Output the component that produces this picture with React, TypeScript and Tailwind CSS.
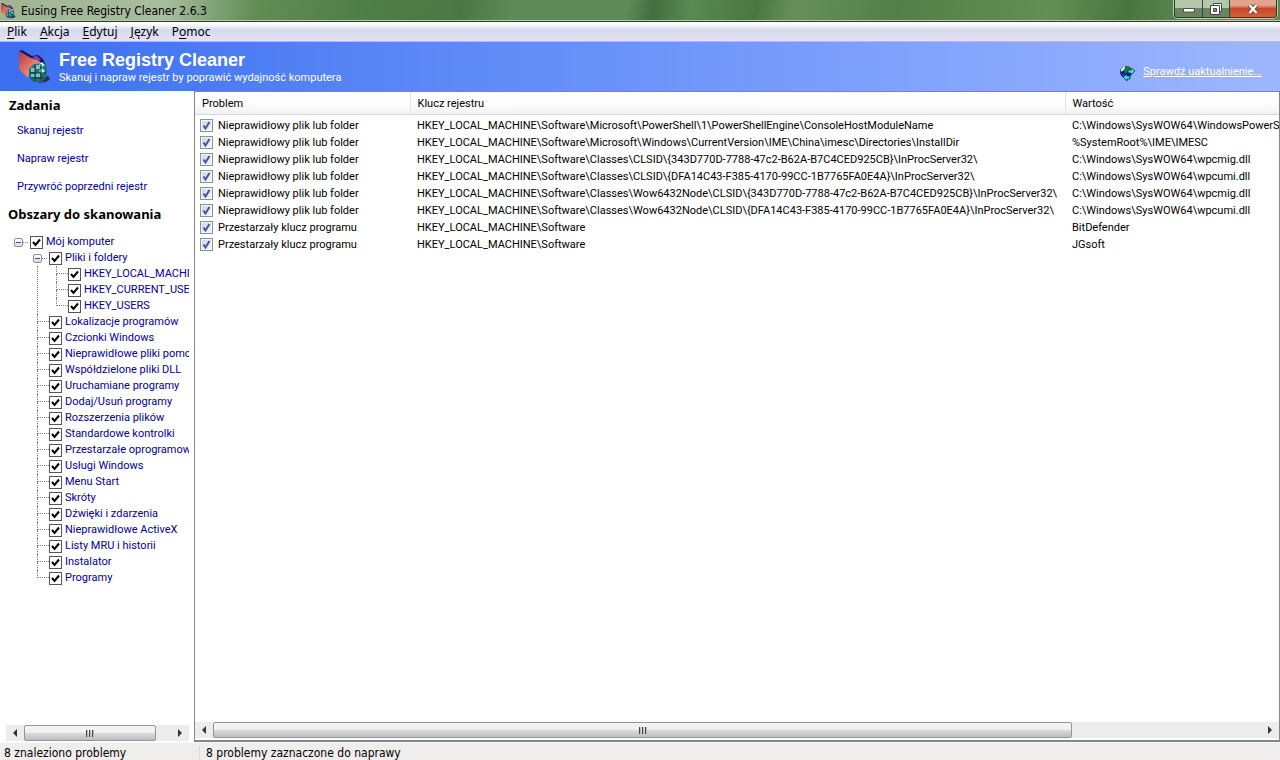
import { useState, type ReactNode } from "react";

const menuItems = [
  { before: "", key: "P", after: "lik" },
  { before: "", key: "A", after: "kcja" },
  { before: "", key: "E", after: "dytuj" },
  { before: "", key: "J", after: "ęzyk" },
  { before: "P", key: "o", after: "moc" },
];

const tasks = ["Skanuj rejestr", "Napraw rejestr", "Przywróć poprzedni rejestr"];

const hives = ["HKEY_LOCAL_MACHINE", "HKEY_CURRENT_USER", "HKEY_USERS"];

const areas = [
  "Lokalizacje programów",
  "Czcionki Windows",
  "Nieprawidłowe pliki pomocy",
  "Współdzielone pliki DLL",
  "Uruchamiane programy",
  "Dodaj/Usuń programy",
  "Rozszerzenia plików",
  "Standardowe kontrolki",
  "Przestarzałe oprogramowanie",
  "Usługi Windows",
  "Menu Start",
  "Skróty",
  "Dźwięki i zdarzenia",
  "Nieprawidłowe ActiveX",
  "Listy MRU i historii",
  "Instalator",
  "Programy",
];

const problems = [
  {
    problem: "Nieprawidłowy plik lub folder",
    registryKey: "HKEY_LOCAL_MACHINE\\Software\\Microsoft\\PowerShell\\1\\PowerShellEngine\\ConsoleHostModuleName",
    value: "C:\\Windows\\SysWOW64\\WindowsPowerShell",
  },
  {
    problem: "Nieprawidłowy plik lub folder",
    registryKey: "HKEY_LOCAL_MACHINE\\Software\\Microsoft\\Windows\\CurrentVersion\\IME\\China\\imesc\\Directories\\InstallDir",
    value: "%SystemRoot%\\IME\\IMESC",
  },
  {
    problem: "Nieprawidłowy plik lub folder",
    registryKey: "HKEY_LOCAL_MACHINE\\Software\\Classes\\CLSID\\{343D770D-7788-47c2-B62A-B7C4CED925CB}\\InProcServer32\\",
    value: "C:\\Windows\\SysWOW64\\wpcmig.dll",
  },
  {
    problem: "Nieprawidłowy plik lub folder",
    registryKey: "HKEY_LOCAL_MACHINE\\Software\\Classes\\CLSID\\{DFA14C43-F385-4170-99CC-1B7765FA0E4A}\\InProcServer32\\",
    value: "C:\\Windows\\SysWOW64\\wpcumi.dll",
  },
  {
    problem: "Nieprawidłowy plik lub folder",
    registryKey: "HKEY_LOCAL_MACHINE\\Software\\Classes\\Wow6432Node\\CLSID\\{343D770D-7788-47c2-B62A-B7C4CED925CB}\\InProcServer32\\",
    value: "C:\\Windows\\SysWOW64\\wpcmig.dll",
  },
  {
    problem: "Nieprawidłowy plik lub folder",
    registryKey: "HKEY_LOCAL_MACHINE\\Software\\Classes\\Wow6432Node\\CLSID\\{DFA14C43-F385-4170-99CC-1B7765FA0E4A}\\InProcServer32\\",
    value: "C:\\Windows\\SysWOW64\\wpcumi.dll",
  },
  { problem: "Przestarzały klucz programu", registryKey: "HKEY_LOCAL_MACHINE\\Software", value: "BitDefender" },
  { problem: "Przestarzały klucz programu", registryKey: "HKEY_LOCAL_MACHINE\\Software", value: "JGsoft" },
];

function RegistryIcon({ className }: { className: string }) {
  return (
    <svg viewBox="0 0 32 34" className={className} aria-hidden="true">
      <defs>
        <linearGradient id="book" x1="0" y1="0" x2="1" y2="1">
          <stop offset="0" stopColor="#b83838" />
          <stop offset="0.6" stopColor="#e88878" />
          <stop offset="1" stopColor="#b84040" />
        </linearGradient>
      </defs>
      <path d="M1 2 L13 8 L24 9 L26 14 L13 17 L10 28 L1 19 Z" fill="url(#book)" />
      <path d="M1 1 L4 0 L14 6 L20 5 L25 9 L28 16 L24 14 L20 10 L13 8 Z" fill="#24104e" />
      <path d="M14 7 L19 6 L23 10 L20 11 Z" fill="#7844c8" />
      <path d="M23 28 L30 26 L32 29 L28 32 L20 33 Z" fill="#26304e" />
      <path d="M11 19 L16 14 L25 13 L29 17 L29 26 L24 32 L15 32 L11 27 Z" fill="#257078" />
      <path d="M13 18h4v4h-4z M18 15h4v4h-4z M18 23h4v4h-4z M13 24h4v3h-4z" fill="#78c8bc" />
      <path d="M24 18 l3 3 -3 3 -3 -3z M21 14 l3 -2 3 3 -3 2z" fill="#baf0dc" />
      <path d="M12 23h16 M17 15v17 M23 14v17 M13 28h13" stroke="#0c3948" strokeWidth="1" fill="none" />
    </svg>
  );
}

function UpdateIcon() {
  return (
    <svg viewBox="0 0 16 16" className="h-4 w-4" aria-hidden="true">
      <circle cx="7" cy="7" r="6" fill="#101c88" />
      <path d="M2 4l3-3 2 1-2 3-3 2z" fill="#cfeee6" />
      <path d="M6 2l4-1 2 3-1 3H8L6 9 5 6z" fill="#1d7a34" />
      <path d="M3 9l3 1 1 3-3-1z" fill="#2350d8" />
      <path d="M9 5h3V3l4 3-4 4V8H9z" fill="#2ee6ee" stroke="#062a4c" strokeWidth="0.8" />
      <path d="M11 11H8V9l-4 3 4 4v-2h3z" fill="#2ee6ee" stroke="#062a4c" strokeWidth="0.8" />
    </svg>
  );
}

function WindowButtons() {
  return (
    <div className="mr-[3px] flex h-[18px] overflow-hidden rounded-b border border-t-0 border-[#274022] shadow-[0_0_0_1px_#b5cbab]">
      <button type="button" aria-label="Minimalizuj" className="flex w-7 items-center justify-center border-r border-[#324b2c] bg-linear-to-b from-[#b4c6ac] from-45% to-[#68855f] to-50%">
        <svg viewBox="0 0 12 12" className="h-3 w-3">
          <path d="M0.5 5.5h11v3.5h-11z" fill="#fff" stroke="#4b5749" />
        </svg>
      </button>
      <button type="button" aria-label="Przywróć w dół" className="flex w-[27px] items-center justify-center border-r border-[#324b2c] bg-linear-to-b from-[#b4c6ac] from-45% to-[#68855f] to-50%">
        <svg viewBox="0 0 12 12" className="h-3 w-3">
          <path d="M3.5 0.5h8v8h-8z" fill="#fff" stroke="#3f493e" />
          <path d="M0.5 2.5h9v9h-9z" fill="#fff" stroke="#3f493e" />
          <path d="M3.5 5.5h3v3h-3z" fill="#8a9a86" stroke="#3f493e" />
        </svg>
      </button>
      <button type="button" aria-label="Zamknij" className="flex w-[46px] items-center justify-center bg-linear-to-b from-[#e2a48f] from-30% via-[#c9482a] via-50% to-[#d0603c]">
        <svg viewBox="0 0 12 12" className="h-3 w-3">
          <path d="M2.5 2l7 8 M9.5 2l-7 8" stroke="#5c3936" strokeWidth="4" />
          <path d="M2.5 2l7 8 M9.5 2l-7 8" stroke="#fff" strokeWidth="2.5" />
        </svg>
      </button>
    </div>
  );
}

function TickBox({ id, tone }: { id: string; tone: "tree" | "list" }) {
  const [checked, setChecked] = useState(true);
  const box =
    tone === "tree"
      ? "border-[#555] bg-white"
      : "border-[#8b9199] bg-linear-to-br from-[#ccd4e4] to-[#f8fafc] outline-1 -outline-offset-2 outline-[#f5f5f5]";
  return (
    <span className="relative block h-[13px] w-[13px] shrink-0">
      <input
        id={id}
        type="checkbox"
        checked={checked}
        onChange={() => setChecked(!checked)}
        className={`block h-[13px] w-[13px] appearance-none border ${box}`}
      />
      {checked && (
        <svg viewBox="0 0 13 13" className="pointer-events-none absolute inset-0 h-[13px] w-[13px]" aria-hidden="true">
          <path
            d={tone === "tree" ? "M3 6l2.5 3L10 3.5" : "M3.5 6.5l2 3L9.5 3"}
            fill="none"
            stroke={tone === "tree" ? "#000" : "#3d5799"}
            strokeWidth="2"
          />
        </svg>
      )}
    </span>
  );
}

function Expander({ label }: { label: string }) {
  return (
    <button type="button" aria-label={label} className="flex h-[9px] w-[9px] shrink-0 items-center justify-center rounded-xs border border-[#919191] bg-linear-to-b from-white to-[#dcdcdc]">
      <span className="h-px w-[5px] bg-[#3d4f86]" />
    </button>
  );
}

function TreeLabel({ id, children }: { id: string; children: ReactNode }) {
  return (
    <label htmlFor={id} className="ml-[3px] whitespace-nowrap">
      {children}
    </label>
  );
}

// Dotted connector: the vertical part stops halfway down on the last item.
function Branch({ last = false }: { last?: boolean }) {
  return (
    <span className="flex h-4 w-3 shrink-0 flex-col">
      <span className="h-2 border-b border-l border-dotted border-[#808080]" />
      <span className={last ? "h-2" : "h-2 border-l border-dotted border-[#808080]"} />
    </span>
  );
}

function ScanTree() {
  return (
    <ul className="mt-3 overflow-hidden pl-3.5 text-[11px] leading-4 text-[#0000a0]">
      <li>
        <div className="flex h-4 items-center">
          <Expander label="Zwiń Mój komputer" />
          <span className="mr-0.5 w-[5px] border-b border-dotted border-[#808080]" />
          <TickBox id="root-item" tone="tree" />
          <TreeLabel id="root-item">Mój komputer</TreeLabel>
        </div>
        <ul className="pl-[19px]">
          <li>
            <div className="flex h-4 items-center">
              <Expander label="Zwiń Pliki i foldery" />
              <span className="mr-0.5 w-[5px] border-b border-dotted border-[#808080]" />
              <TickBox id="files" tone="tree" />
              <TreeLabel id="files">Pliki i foldery</TreeLabel>
            </div>
            <ul className="ml-1 border-l border-dotted border-[#808080] pl-[18px]">
              {hives.map((name, i) => (
                <li key={name} className="flex h-4 items-center">
                  <Branch last={i === hives.length - 1} />
                  <TickBox id={name} tone="tree" />
                  <TreeLabel id={name}>{name}</TreeLabel>
                </li>
              ))}
            </ul>
          </li>
          {areas.map((name, i) => (
            <li key={name} className="flex h-4 items-center pl-1">
              <Branch last={i === areas.length - 1} />
              <TickBox id={`area-${i}`} tone="tree" />
              <TreeLabel id={`area-${i}`}>{name}</TreeLabel>
            </li>
          ))}
        </ul>
      </li>
    </ul>
  );
}

function ScrollBar({ thumb }: { thumb: string }) {
  return (
    <div className="flex h-4 items-stretch bg-[#ececec]">
      <button type="button" aria-label="Przewiń w lewo" className="flex w-[18px] shrink-0 items-center justify-center">
        <svg viewBox="0 0 4 8" className="h-2 w-1">
          <path d="M4 0v8L0 4z" fill="#333" />
        </svg>
      </button>
      <div className="flex grow">
        <div className={`flex items-center justify-center gap-px rounded-xs border border-[#969696] bg-linear-to-b from-[#f2f2f2] from-45% via-[#dcdcde] via-50% to-[#bdbdc1] ${thumb}`}>
          <span className="h-[7px] w-0.5 border-l border-[#444] bg-[#bbb]" />
          <span className="h-[7px] w-0.5 border-l border-[#444] bg-[#bbb]" />
          <span className="h-[7px] w-0.5 border-l border-[#444] bg-[#bbb]" />
        </div>
      </div>
      <button type="button" aria-label="Przewiń w prawo" className="flex w-[18px] shrink-0 items-center justify-center">
        <svg viewBox="0 0 4 8" className="h-2 w-1">
          <path d="M0 0v8l4-4z" fill="#333" />
        </svg>
      </button>
    </div>
  );
}

function ProblemTable() {
  return (
    <table className="w-full table-fixed border-collapse text-left text-[11px] whitespace-nowrap text-black">
      <colgroup>
        <col className="w-[215px]" />
        <col className="w-[655px]" />
        <col />
      </colgroup>
      <thead>
        <tr className="h-[23px] bg-linear-to-b from-white from-40% to-[#f0f1f3] shadow-[inset_0_-1px_0_#d5d5d5]">
          <th className="border-r border-[#e0e3e8] pt-0.5 pl-[7px] font-normal">Problem</th>
          <th className="border-r border-[#e0e3e8] pt-0.5 pl-[7px] font-normal">Klucz rejestru</th>
          <th className="pt-0.5 pl-[7px] font-normal">Wartość</th>
        </tr>
      </thead>
      <tbody>
        <tr className="h-0.5" />
        {problems.map((row, i) => (
          <tr key={i} className="h-[17px] leading-[17px]">
            <td className="p-0 pl-[5px]">
              <div className="flex items-center">
                <TickBox id={`problem-${i}`} tone="list" />
                <label htmlFor={`problem-${i}`} className="ml-[5px]">
                  {row.problem}
                </label>
              </div>
            </td>
            <td className="p-0 pl-[7px]">{row.registryKey}</td>
            <td className="overflow-hidden p-0 pl-[7px]">{row.value}</td>
          </tr>
        ))}
      </tbody>
    </table>
  );
}

export default function App() {
  return (
    <div className="flex h-screen flex-col overflow-hidden bg-white font-[Roboto,'Liberation_Sans',sans-serif]">
      <header className="flex h-[22px] shrink-0 items-start justify-between border-b border-[#30402c] bg-[linear-gradient(100deg,#9fb592_0%,#a9bd9f_13%,#88a87d_16%,#628d55_20%,#4f7f48_28%,#4a7844_36%,#5c8a58_40%,#5c8a58_49%,#416f40_51%,#5a8a54_54%,#48783f_59%,#678f5c_62%,#528048_70%,#628f54_82%,#47753f_88%,#628c5a_94%,#5f8a56_100%)] shadow-[inset_0_-1px_0_#b8c8ac]">
        <div className="flex h-[21px] items-center gap-[5px]">
          <RegistryIcon className="h-4 w-4" />
          <h1 className="font-['DejaVu_Sans_Condensed','DejaVu_Sans',sans-serif] text-xs text-black">Eusing Free Registry Cleaner 2.6.3</h1>
        </div>
        <WindowButtons />
      </header>

      <nav className="flex h-5 shrink-0 items-center gap-[13px] border-b border-[#b6bccb] bg-linear-to-b from-white from-10% via-[#d5dcec] via-40% to-[#e4e2f4] pl-[7px] font-['Noto_Sans',sans-serif] text-xs text-black">
        {menuItems.map((item) => (
          <button key={item.key} type="button">
            {item.before}
            <span className="underline underline-offset-2">{item.key}</span>
            {item.after}
          </button>
        ))}
      </nav>

      <section className="flex h-[49px] shrink-0 items-center justify-between bg-linear-to-r from-[#3a6ff0] to-[#9db6ff] px-[18px] text-white">
        <div className="flex items-center gap-[9px]">
          <RegistryIcon className="h-[34px] w-8" />
          <div className="pt-0.5">
            <h2 className="font-['Liberation_Sans',Arial,sans-serif] text-lg leading-5 font-bold">Free Registry Cleaner</h2>
            <p className="text-[11px] leading-4">Skanuj i napraw rejestr by poprawić wydajność komputera</p>
          </div>
        </div>
        <a href="#aktualizacja" className="mt-3 flex items-center gap-2 text-[11px]">
          <UpdateIcon />
          <span className="underline">Sprawdź uaktualnienie...</span>
        </a>
      </section>

      <main className="flex min-h-0 grow">
        <aside className="flex w-[194px] shrink-0 flex-col pr-[5px]">
          <h3 className="mt-1.5 pl-[9px] font-['Noto_Sans',sans-serif] text-[13px] leading-4 font-bold text-black">Zadania</h3>
          <ul className="mt-1 pl-[17px] text-[11px] leading-7 text-[#0000a0]">
            {tasks.map((task) => (
              <li key={task}>
                <button type="button">{task}</button>
              </li>
            ))}
          </ul>
          <h3 className="mt-[5px] pl-2 font-['Noto_Sans',sans-serif] text-[13px] leading-4 font-bold text-black">Obszary do skanowania</h3>
          <ScanTree />
          <div className="mt-auto pb-px pl-1.5">
            <ScrollBar thumb="w-[132px]" />
          </div>
        </aside>
        <section className="flex min-w-0 grow flex-col overflow-hidden border border-b-2 border-[#828790]">
          <ProblemTable />
          <div className="mt-auto pb-0.5">
            <ScrollBar thumb="w-[82%]" />
          </div>
        </section>
      </main>

      <footer className="flex h-[18px] shrink-0 items-center border-t border-[#f8f8f8] bg-[#f0eded] pt-0.5 font-['DejaVu_Sans_Condensed','DejaVu_Sans',sans-serif] text-xs text-black">
        <span className="w-[200px] border-r border-[#dcdcdc] pl-1">8 znaleziono problemy</span>
        <span className="pl-1.5">8 problemy zaznaczone do naprawy</span>
      </footer>
    </div>
  );
}
